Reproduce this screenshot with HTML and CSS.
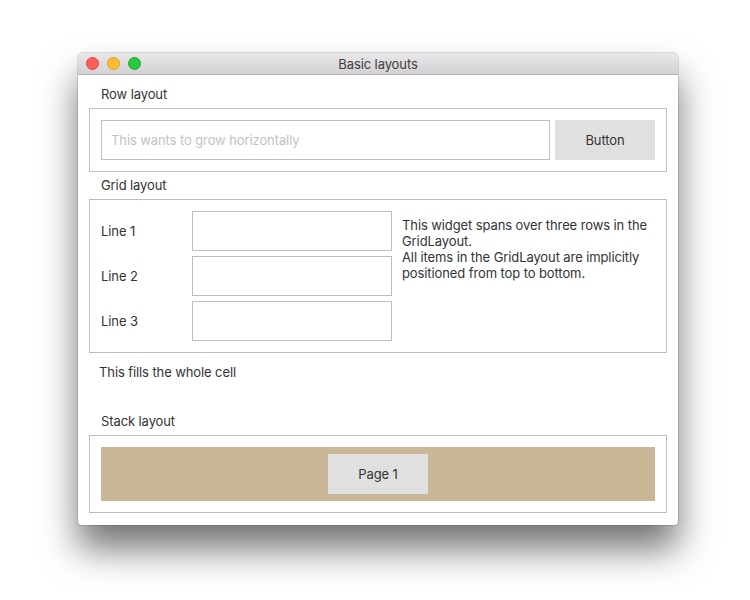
FILE: index.html
```html
<!DOCTYPE html>
<html>
<head>
<meta charset="utf-8">
<link rel="stylesheet" href="styles.css">
</head>
<body>
<div class="stage">
  <div class="window">
    <div class="titlebar">
      <div class="lights">
        <span class="light red"></span>
        <span class="light yellow"></span>
        <span class="light green"></span>
      </div>
      <div class="title">Basic layouts</div>
    </div>
    <div class="content">
      <div class="label">Row layout</div>
      <div class="frame row-frame">
        <div class="input"><span class="placeholder">This wants to grow horizontally</span></div>
        <div class="button">Button</div>
      </div>
      <div class="label">Grid layout</div>
      <div class="frame grid-frame">
        <div class="line-label">Line 1</div>
        <div class="input grid-input"></div>
        <div class="span-text">This widget spans over three rows in the GridLayout.<br>All items in the GridLayout are implicitly positioned from top to bottom.</div>
        <div class="line-label">Line 2</div>
        <div class="input grid-input"></div>
        <div class="line-label">Line 3</div>
        <div class="input grid-input"></div>
      </div>
      <div class="fill-cell">This fills the whole cell</div>
      <div class="label">Stack layout</div>
      <div class="frame stack-frame">
        <div class="stack">
          <div class="button page">Page 1</div>
        </div>
      </div>
    </div>
  </div>
</div>
</body>
</html>
```
FILE: styles.css
```css
html, body {
  margin: 0;
  padding: 0;
  background: #ffffff;
}
body {
  font-family: "Inter", "Noto Sans", sans-serif;
  font-size: 13px;
  letter-spacing: -0.1px;
  color: #333333;
}
.stage {
  padding: 53px 0 0 78px;
  min-height: 600px;
  box-sizing: border-box;
}
.window {
  width: 600px;
  height: 472px;
  background: #ffffff;
  border-radius: 5px 5px 4px 4px;
  box-shadow: 0 0 0 1px rgba(0,0,0,0.12), 0 24px 36px rgba(0,0,0,0.55);
  display: flex;
  flex-direction: column;
  overflow: hidden;
}
.titlebar {
  height: 21px;
  border-bottom: 1px solid #b4b2b4;
  background: linear-gradient(#e9e7e9, #d3d1d3);
  display: flex;
  align-items: center;
  position: relative;
}
.lights {
  display: flex;
  gap: 8px;
  padding-left: 8px;
}
.light {
  width: 11px;
  height: 11px;
  border-radius: 50%;
  border: 0.5px solid transparent;
}
.red { background: #fe5f57; border-color: #e0443e; }
.yellow { background: #febc2e; border-color: #dea123; }
.green { background: #28c840; border-color: #1aab29; }
.title {
  position: absolute;
  left: 0;
  right: 0;
  top: 0;
  line-height: 22px;
  text-align: center;
  color: #404040;
  font-size: 13px;
}
.content {
  padding: 8px 11px 11px 11px;
  display: flex;
  flex-direction: column;
}
.label {
  padding-left: 12px;
  line-height: 22px;
  height: 22px;
  margin-bottom: 3px;
  color: #333;
}
.frame {
  border: 1px solid #bdbdbd;
  padding: 11px;
}
.row-frame {
  display: flex;
  gap: 5px;
  margin-bottom: 2px;
}
.input {
  border: 1px solid #bdbdbd;
  height: 38px;
  background: #fff;
  display: flex;
  align-items: center;
}
.row-frame .input {
  flex: 1;
  padding-left: 9px;
}
.placeholder {
  color: #c2c2c2;
}
.button {
  width: 100px;
  height: 40px;
  background: #e0e0e0;
  display: flex;
  align-items: center;
  justify-content: center;
  color: #333;
}
.grid-frame {
  display: grid;
  grid-template-columns: 91px 200px 1fr;
  grid-template-rows: 40px 40px 40px;
  row-gap: 5px;
  column-gap: 0;
}
.line-label {
  display: flex;
  align-items: center;
}
.span-text {
  grid-column: 3;
  grid-row: 1 / span 3;
  padding-left: 10px;
  padding-top: 6px;
  line-height: 16px;
  color: #333;
}
.fill-cell {
  padding-left: 10px;
  height: 57px;
  line-height: 38px;
}
.stack {
  height: 54px;
  background: #c9b798;
  display: flex;
  align-items: center;
  justify-content: center;
}
```
